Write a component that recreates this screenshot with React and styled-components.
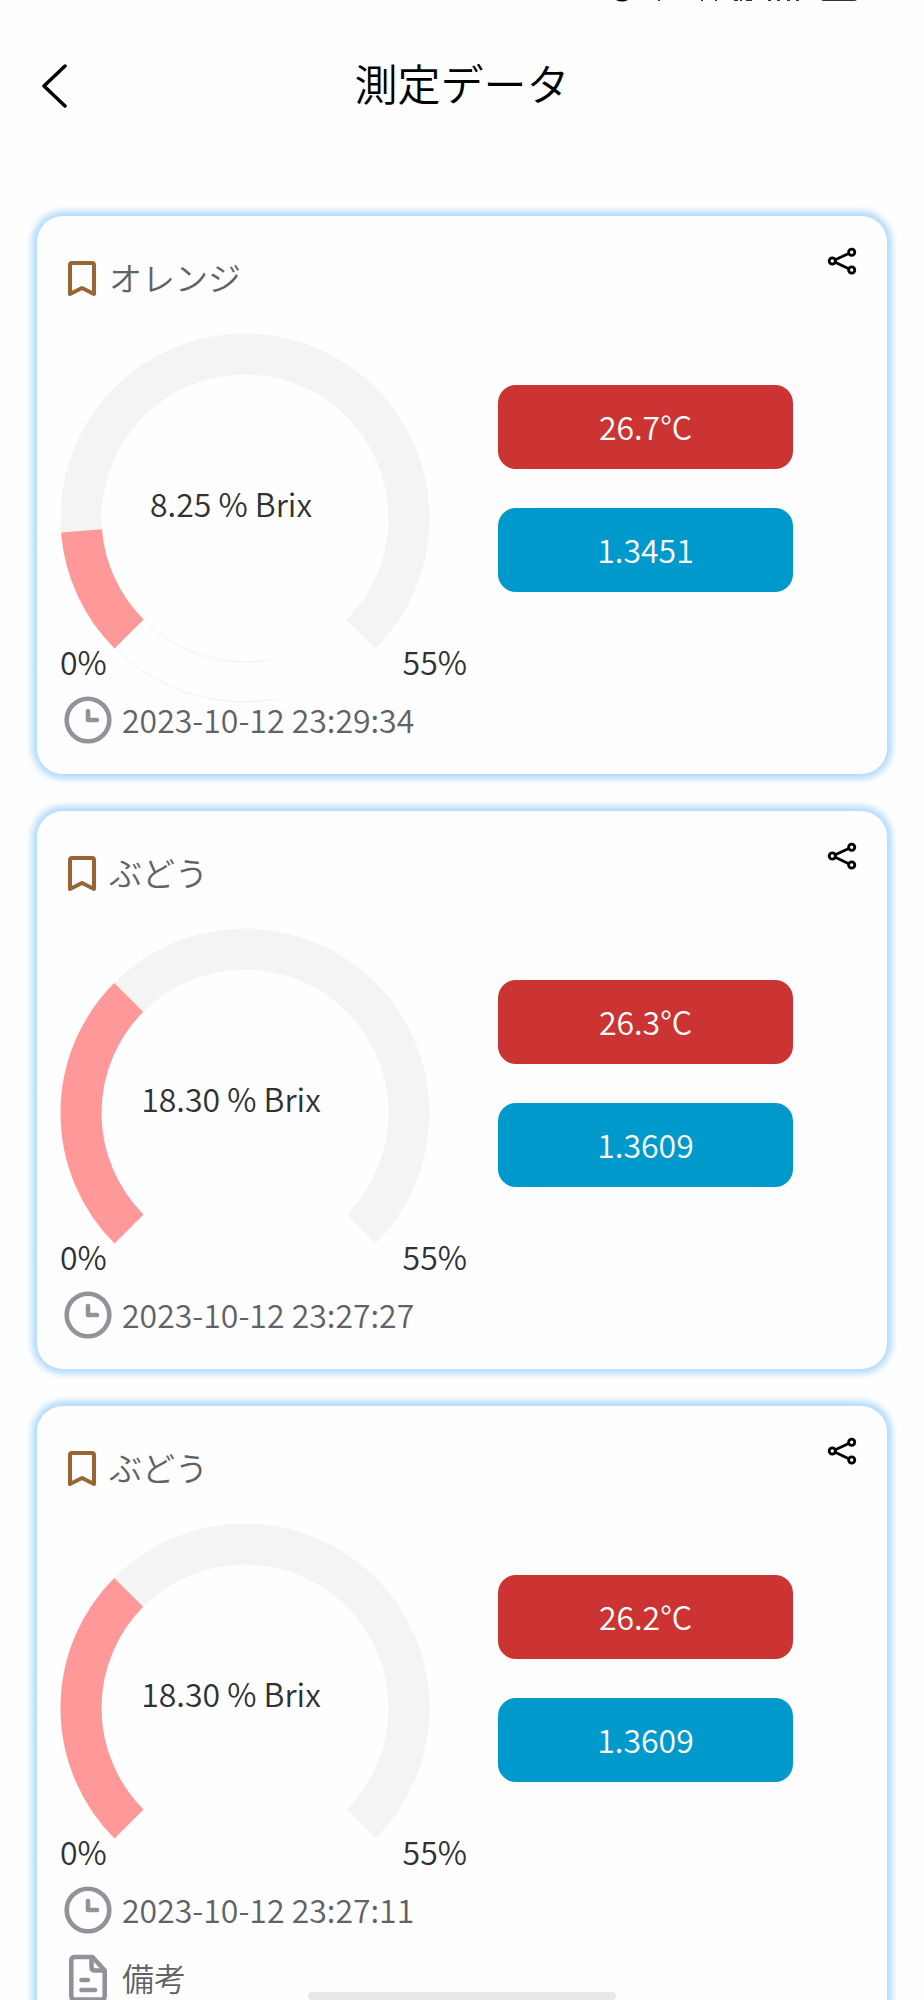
import React from 'react';
import styled, { createGlobalStyle } from 'styled-components';

const MAX_BRIX = 55;

const records = [
  { id: 1, name: 'オレンジ', brix: '8.25', temp: '26.7', index: '1.3451', time: '2023-10-12 23:29:34', outline: '#fbeeee' },
  { id: 2, name: 'ぶどう', brix: '18.30', temp: '26.3', index: '1.3609', time: '2023-10-12 23:27:27', outline: '#fcfcfc' },
  { id: 3, name: 'ぶどう', brix: '18.30', temp: '26.2', index: '1.3609', time: '2023-10-12 23:27:11', outline: '#fcfcfc', note: '備考' },
];

// point on the gauge, angle in degrees clockwise from the right
const pointAt = (angle, radius) => {
  const rad = (angle * Math.PI) / 180;
  return `${185 + radius * Math.cos(rad)} ${185 + radius * Math.sin(rad)}`;
};

const arc = (from, to) => {
  const large = to - from > 180 ? 1 : 0;
  return `M ${pointAt(from, 164)} A 164 164 0 ${large} 1 ${pointAt(to, 164)}`;
};

const Gauge = ({ brix, outline }) => {
  const end = 135 + (Number(brix) / MAX_BRIX) * 270;
  return (
    <GaugeContainer>
      <GaugeDrawing>
        <svg width="370" height="312" viewBox="0 0 370 312" fill="none" overflow="visible" aria-hidden="true">
          <path d={`M ${pointAt(80, 184)} A 184 184 0 0 1 ${pointAt(135, 184)}`} stroke={outline} />
          <path d={`M ${pointAt(80, 144)} A 144 144 0 0 1 ${pointAt(135, 144)}`} stroke={outline} />
          <path d={arc(135, 405)} stroke="#f4f4f4" strokeWidth="41" />
          <path d={arc(135, end)} stroke="#ff9999" strokeWidth="41" />
        </svg>
        <GaugeValue>{brix} % Brix</GaugeValue>
      </GaugeDrawing>
      <GaugeScale>
        <span>0%</span>
        <span>{MAX_BRIX}%</span>
      </GaugeScale>
    </GaugeContainer>
  );
};

const BackIcon = () => (
  <svg width="30" height="48" viewBox="0 0 30 48" fill="none" stroke="#000" strokeWidth="3.5" strokeLinecap="round" strokeLinejoin="round" aria-hidden="true">
    <path d="M28 5 L7 25 L28 45" />
  </svg>
);

const BookmarkIcon = () => (
  <svg width="28" height="35" viewBox="0 0 28 35" fill="none" stroke="#996633" strokeWidth="4" strokeLinejoin="round" aria-hidden="true">
    <path d="M2 33 V4 Q2 2 4 2 H24 Q26 2 26 4 V33 L14 27 Z" />
  </svg>
);

const ShareIcon = () => (
  <svg width="34" height="34" viewBox="0 0 34 34" fill="none" stroke="#000" strokeWidth="2.8" aria-hidden="true">
    <circle cx="7.3" cy="17" r="3.1" />
    <circle cx="26.7" cy="8.2" r="3.1" />
    <circle cx="26.7" cy="26" r="3.1" />
    <path d="M10.2 15.7 L23.8 9.5 M10.2 18.3 L23.8 24.7" />
  </svg>
);

const ClockIcon = () => (
  <svg width="48" height="48" viewBox="0 0 48 48" fill="none" stroke="#909399" aria-hidden="true">
    <circle cx="24" cy="24" r="21.3" strokeWidth="4.6" />
    <path d="M24 15 V24 H33" strokeWidth="4.6" strokeLinecap="round" strokeLinejoin="round" />
  </svg>
);

const NoteIcon = () => (
  <svg width="48" height="48" viewBox="0 0 48 48" fill="none" stroke="#909399" strokeWidth="4.6" strokeLinecap="round" strokeLinejoin="round" aria-hidden="true">
    <path d="M28.5 3 H11 Q7.3 3 7.3 6.5 V42 Q7.3 45.5 11 45.5 H37 Q40.7 45.5 40.7 42 V16.5 Z" />
    <path d="M27.5 3.5 V13 Q27.5 16.5 31 16.5 H40" />
    <path d="M17.5 26 H24 M17.5 36 H31" />
  </svg>
);

// lower edge of the system status icons
const StatusBar = () => (
  <StatusContainer aria-hidden="true">
    <svg width="250" height="2" viewBox="0 0 250 2">
      <path d="M3 0 H15 Q9 3 3 0 Z" fill="#000" />
      <path d="M45 0h2v1h-2z M88 0h2v1h-2z M102 0h2v1h-2z M121 0h4v1h-4z M127 0h2v1h-2z M133 0h6v1h-6z M155 0h3v1h-3z M164 0h3v1h-3z M174 0h3v1h-3z M183 0h3v1h-3z M208 0h36l-2 1h-32z" fill="#333" />
    </svg>
  </StatusContainer>
);

const RecordCard = ({ record }) => (
  <Card>
    <CardHeader>
      <CardTitle>
        <BookmarkIcon />
        <span>{record.name}</span>
      </CardTitle>
      <IconButton type="button" aria-label="共有">
        <ShareIcon />
      </IconButton>
    </CardHeader>
    <CardBody>
      <Gauge brix={record.brix} outline={record.outline} />
      <Readouts>
        <Readout $color="#cc3333">{record.temp}°C</Readout>
        <Readout $color="#0099cc">{record.index}</Readout>
      </Readouts>
    </CardBody>
    <Details>
      <DetailRow>
        <ClockIcon />
        <time>{record.time}</time>
      </DetailRow>
      {record.note && (
        <DetailRow>
          <NoteIcon />
          <span>{record.note}</span>
        </DetailRow>
      )}
    </Details>
  </Card>
);

const App = () => {
  return (
    <>
      <GlobalStyle />
      <Screen>
        <StatusBar />
        <PageHeader>
          <IconButton type="button" aria-label="戻る">
            <BackIcon />
          </IconButton>
          <PageTitle>測定データ</PageTitle>
        </PageHeader>
        <RecordList>
          {records.map((record) => (
            <li key={record.id}>
              <RecordCard record={record} />
            </li>
          ))}
        </RecordList>
        <HomeIndicator />
      </Screen>
    </>
  );
};

export default App;

const GlobalStyle = createGlobalStyle`
  * {
    box-sizing: border-box;
  }
  body {
    margin: 0;
    background-color: #fefefe;
    color: #303133;
    font-family: 'Noto Sans CJK JP', sans-serif;
    font-weight: 350;
    font-size: 32px;
  }
  svg {
    display: block;
    flex-shrink: 0;
  }
`;

const Screen = styled.div`
  display: flex;
  flex-direction: column;
  height: 100vh;
  overflow: hidden;
`;

const StatusContainer = styled.div`
  display: flex;
  justify-content: flex-end;
  padding-right: 61px;
`;

const PageHeader = styled.header`
  display: grid;
  grid-template-columns: 1fr auto 1fr;
  align-items: center;
  padding: 48px 37px 72px;
`;

const PageTitle = styled.h1`
  margin: 0;
  padding-bottom: 6px;
  color: #000;
  font-size: 43px;
  font-weight: 350;
  line-height: 64px;
`;

const IconButton = styled.button`
  justify-self: start;
  padding: 0;
  border: none;
  background: none;
  cursor: pointer;
`;

const RecordList = styled.ul`
  display: flex;
  flex: 1;
  flex-direction: column;
  gap: 37px;
  min-height: 0;
  margin: 0;
  padding: 24px 37px;
  overflow-y: auto;
  list-style: none;
  scrollbar-width: none;
`;

const Card = styled.article`
  border-radius: 26px;
  background-color: #fefefe;
  box-shadow: 0 0 6px 5px #b3dbff;
`;

const CardHeader = styled.div`
  display: flex;
  align-items: flex-start;
  justify-content: space-between;
  padding: 28px 28px 31px 31px;
`;

const CardTitle = styled.h2`
  display: flex;
  align-items: center;
  gap: 13px;
  margin: 0;
  padding-top: 10px;
  color: #606266;
  font-size: 33px;
  font-weight: 350;
  line-height: 48px;

  span {
    padding-bottom: 2px;
    line-height: 46px;
  }
`;

const CardBody = styled.div`
  display: flex;
  gap: 31px;
  padding: 0 94px 0 23px;
`;

const GaugeContainer = styled.div`
  flex: 0 0 407px;
`;

const GaugeDrawing = styled.div`
  position: relative;
  width: 370px;
`;

const GaugeValue = styled.div`
  position: absolute;
  top: 146px;
  left: 0;
  right: 28px;
  line-height: 48px;
  text-align: center;
`;

const GaugeScale = styled.div`
  display: flex;
  justify-content: space-between;
  line-height: 32px;
`;

const Readouts = styled.div`
  display: flex;
  flex: 1;
  flex-direction: column;
  gap: 39px;
  padding-top: 52px;
`;

const Readout = styled.div`
  padding-bottom: 2px;
  border-radius: 18px;
  background-color: ${({ $color }) => $color};
  color: #fff;
  line-height: 82px;
  text-align: center;
`;

const Details = styled.div`
  display: flex;
  flex-direction: column;
  gap: 20px;
  padding: 19px 27px 30px;
`;

const DetailRow = styled.div`
  display: flex;
  align-items: flex-start;
  gap: 10px;
  color: #606266;
  line-height: 46px;
`;

const HomeIndicator = styled.div`
  position: fixed;
  bottom: 0;
  left: 50%;
  width: 308px;
  height: 8px;
  margin-left: -154px;
  border-radius: 4px;
  background-color: #e8e8e8;
`;
